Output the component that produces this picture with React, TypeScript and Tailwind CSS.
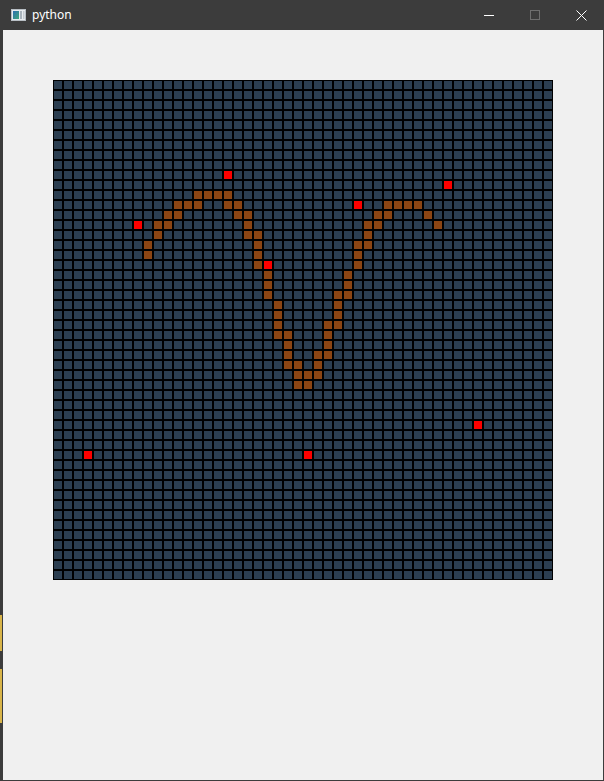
import React from 'react';

const SIZE = 50;

const RED: [number, number][] = [
  [9, 17], [14, 8], [12, 30], [10, 39], [18, 21], [34, 42], [37, 3], [37, 25],
];

const SNAKE: Record<number, number[]> = {
  11: [14, 15, 16, 17],
  12: [12, 13, 14, 17, 18, 33, 34, 35, 36],
  13: [11, 12, 18, 19, 32, 33, 37],
  14: [10, 11, 19, 31, 32, 38],
  15: [10, 19, 20, 31],
  16: [9, 20, 30, 31],
  17: [9, 20, 30],
  18: [20, 30],
  19: [21, 29],
  20: [21, 29],
  21: [21, 28, 29],
  22: [22, 28],
  23: [22, 28],
  24: [22, 27, 28],
  25: [22, 23, 27],
  26: [23, 27],
  27: [23, 26, 27],
  28: [23, 24, 26],
  29: [24, 25, 26],
  30: [24, 25],
};

const cellKind = (r: number, c: number) => {
  if (RED.some(([rr, cc]) => rr === r && cc === c)) return 'food';
  if (SNAKE[r]?.includes(c)) return 'snake';
  return 'empty';
};

const TitleBar: React.FC = () => (
  <div className="h-[30px] flex items-center bg-[#3c3c3c] text-white shrink-0">
    <svg width="15" height="12" viewBox="0 0 15 12" className="ml-[11px]">
      <defs>
        <linearGradient id="ico" x1="0" y1="0" x2="1" y2="1">
          <stop offset="0" stopColor="#2f6fb0" />
          <stop offset="1" stopColor="#3fa87a" />
        </linearGradient>
      </defs>
      <rect x="0.5" y="0.5" width="14" height="11" fill="#e9ecef" stroke="#b8bec4" />
      <rect x="2" y="2" width="6" height="8" fill="url(#ico)" />
      <rect x="9" y="2" width="2" height="8" fill="#a9b3bb" />
      <rect x="12" y="2" width="1.5" height="8" fill="#c6ccd1" />
    </svg>
    <span className="ml-[6px] text-[12px] leading-none" style={{ fontFamily: '"Segoe UI", "Noto Sans", sans-serif' }}>
      python
    </span>
    <div className="ml-auto flex items-center h-full">
      <div className="w-[46px] h-full flex items-center justify-center">
        <div className="w-[10px] h-px bg-white" />
      </div>
      <div className="w-[46px] h-full flex items-center justify-center">
        <div className="w-[10px] h-[10px] border border-[#6e6e6e]" />
      </div>
      <div className="w-[46px] h-full flex items-center justify-center">
        <svg width="11" height="11" viewBox="0 0 11 11">
          <path d="M0.5 0.5 L10.5 10.5 M10.5 0.5 L0.5 10.5" stroke="#ffffff" strokeWidth="1" />
        </svg>
      </div>
    </div>
  </div>
);

export default function App() {
  const cells = [];
  for (let r = 0; r < SIZE; r++) {
    for (let c = 0; c < SIZE; c++) {
      const kind = cellKind(r, c);
      const bg =
        kind === 'food' ? 'bg-[#ff0000]' : kind === 'snake' ? 'bg-[#8b4513]' : 'bg-[#2c3e50]';
      cells.push(<div key={`${r}-${c}`} className={`w-[10px] h-[10px] border border-black ${bg}`} />);
    }
  }

  return (
    <div className="w-[604px] h-[781px] bg-[#3c3c3c] flex flex-col overflow-hidden">
      <TitleBar />
      <div className="flex-1 flex">
        {/* left frame edge, with a sliver of the window behind */}
        <div className="w-[3px] flex flex-col">
          <div className="h-[585px]" />
          <div className="h-[36px] w-[2px] bg-[#d9b54a]" />
          <div className="h-[18px]" />
          <div className="h-[54px] w-[2px] bg-[#d9b54a]" />
        </div>
        <div className="flex-1 mr-px mb-px bg-[#f0f0f0] pt-[50px] pl-[50px]">
          <div className="grid grid-cols-[repeat(50,10px)] w-[500px] h-[500px]">{cells}</div>
        </div>
      </div>
    </div>
  );
}
